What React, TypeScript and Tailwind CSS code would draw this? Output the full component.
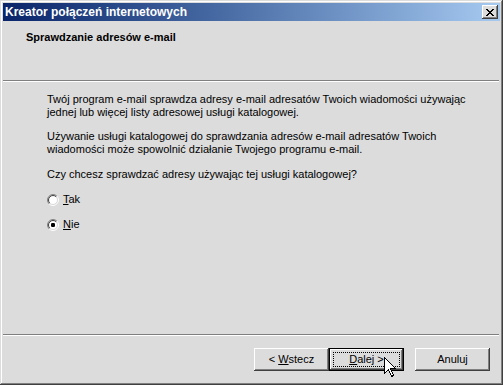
import React from "react";

const font = { fontFamily: '"Liberation Sans", Arial, sans-serif' };

function Radio({ checked }: { checked: boolean }) {
  const r1 = 5.5;
  const r2 = 4.5;
  const k = 0.7071;
  const arc = (r: number, tl: boolean) => {
    const bl = `${6 - r * k} ${6 + r * k}`;
    const tr = `${6 + r * k} ${6 - r * k}`;
    return tl ? `M${bl} A${r} ${r} 0 0 1 ${tr}` : `M${tr} A${r} ${r} 0 0 1 ${bl}`;
  };
  return (
    <svg width="12" height="12" viewBox="0 0 12 12" className="shrink-0">
      <circle cx="6" cy="6" r="4.5" fill="#fff" />
      <path d={arc(r1, true)} stroke="#808080" strokeWidth="1" fill="none" />
      <path d={arc(r1, false)} stroke="#fff" strokeWidth="1" fill="none" />
      <path d={arc(r2, true)} stroke="#404040" strokeWidth="1" fill="none" />
      <path d={arc(r2, false)} stroke="#dcdcdc" strokeWidth="1" fill="none" />
      {checked && <rect x="4" y="4" width="4" height="4" rx="1.2" fill="#000" />}
    </svg>
  );
}

function CloseGlyph() {
  const rows = [
    "xx....xx",
    ".xx..xx.",
    "..xxxx..",
    "...xx...",
    "..xxxx..",
    ".xx..xx.",
    "xx....xx",
  ];
  return (
    <svg width="8" height="7" viewBox="0 0 8 7" shapeRendering="crispEdges">
      {rows.flatMap((row, y) =>
        row.split("").map((c, x) =>
          c === "x" ? <rect key={`${x}-${y}`} x={x} y={y} width="1" height="1" fill="#000" /> : null
        )
      )}
    </svg>
  );
}

const btn3d =
  "shadow-[inset_-1px_-1px_#404040,inset_1px_1px_#ffffff,inset_-2px_-2px_#808080,inset_2px_2px_#dcdcdc]";

export default function App() {
  return (
    <div
      className="relative w-[503px] h-[385px] bg-[#dcdcdc] p-[3px] flex flex-col text-[11px] leading-[13px] text-black shadow-[inset_-1px_-1px_#404040,inset_1px_1px_#dcdcdc,inset_-2px_-2px_#808080,inset_2px_2px_#ffffff]"
      style={font}
    >
      {/* title bar */}
      <div className="h-[18px] flex items-center justify-between bg-gradient-to-r from-[#0a246a] to-[#a6caf0] pl-[2px] pr-[2px]">
        <span className="text-white font-bold text-[12px] leading-[14px]">Kreator połączeń internetowych</span>
        <div className={`w-[16px] h-[14px] bg-[#dcdcdc] flex items-center justify-center ${btn3d}`}>
          <CloseGlyph />
        </div>
      </div>

      {/* header */}
      <div className="h-[59px] pl-[23px] pt-[10px]">
        <div className="font-bold">Sprawdzanie adresów e-mail</div>
      </div>
      <div className="h-px bg-[#808080] mr-px" />
      <div className="h-px bg-white mr-px" />

      {/* body */}
      <div className="flex-1 pl-[44px] pt-[11px] flex flex-col">
        <p>
          Twój program e-mail sprawdza adresy e-mail adresatów Twoich wiadomości używając
          <br />
          jednej lub więcej listy adresowej usługi katalogowej.
        </p>
        <p className="mt-[11px]">
          Używanie usługi katalogowej do sprawdzania adresów e-mail adresatów Twoich
          <br />
          wiadomości może spowolnić działanie Twojego programu e-mail.
        </p>
        <p className="mt-[12px]">Czy chcesz sprawdzać adresy używając tej usługi katalogowej?</p>
        <div className="mt-[12px] flex items-center gap-[4px] h-[13px]">
          <Radio checked={false} />
          <span>
            <span className="underline">T</span>ak
          </span>
        </div>
        <div className="mt-[12px] flex items-center gap-[4px] h-[13px]">
          <Radio checked={true} />
          <span>
            <span className="underline">N</span>ie
          </span>
        </div>
      </div>

      <div className="h-px bg-[#808080] mr-px" />
      <div className="h-px bg-white mr-px" />

      {/* buttons */}
      <div className="h-[46px] flex justify-end items-start pt-[12px] pr-[10px]">
        <div className={`w-[75px] h-[23px] flex items-center justify-center ${btn3d}`}>
          &lt; <span className="underline ml-[3px]">W</span>stecz
        </div>
        <div className="w-[75px] h-[23px] border border-black">
          <div className={`w-full h-full flex items-center justify-center p-[3px] ${btn3d}`}>
            <div className="w-full h-full border border-dotted border-black flex items-center justify-center">
              <span className="underline">D</span>alej &gt;
            </div>
          </div>
        </div>
        <div className={`ml-[11px] w-[75px] h-[23px] flex items-center justify-center ${btn3d}`}>
          Anuluj
        </div>
      </div>

      {/* mouse cursor */}
      <svg
        className="absolute left-[384px] top-[357px]"
        width="13"
        height="21"
        viewBox="0 0 13 21"
        shapeRendering="crispEdges"
      >
        <path
          d="M0.5 0.5 L0.5 16.5 L4.5 12.5 L7.5 19.5 L9.5 18.5 L6.5 11.5 L11.5 11.5 Z"
          fill="#fff"
          stroke="#000"
          strokeWidth="1"
        />
      </svg>
    </div>
  );
}
